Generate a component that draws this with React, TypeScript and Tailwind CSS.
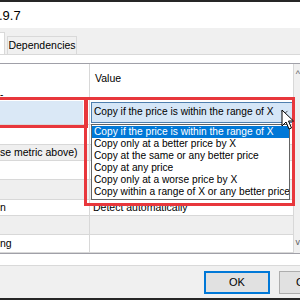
import { ChevronDown } from "lucide-react";

const options = [
  "Copy if the price is within the range of X",
  "Copy only at a better price by X",
  "Copy at the same or any better price",
  "Copy at any price",
  "Copy only at a worse price by X",
  "Copy within a range of X or any better price",
];

type Row = { left: string; right: string; gray?: boolean; h: string };

const rows: Row[] = [
  { left: "", right: "", h: "h-[20px]" },
  { left: "se metric above)", right: "", gray: true, h: "h-[16px]" },
  { left: "", right: "", h: "h-[19px]" },
  { left: "", right: "", gray: true, h: "h-[20px]" },
  { left: "n", right: "Detect automatically", h: "h-[16px]" },
  { left: "", right: "", gray: true, h: "h-[19px]" },
  { left: "ng", right: "", h: "h-[18px]" },
];

function Cursor() {
  return (
    <svg className="absolute left-[281px] top-[109px]" width="14" height="22" viewBox="0 0 14 22">
      <path d="M1 1 L1 17 L5 13 L8 20 L10.5 19 L7.5 12 L12.5 12 Z" fill="white" stroke="black" strokeWidth="1" strokeLinejoin="round" />
    </svg>
  );
}

export default function App() {
  return (
    <div className="relative w-[300px] h-[300px] overflow-hidden bg-[#f0f0f0] text-[10.5px] text-black font-['Liberation_Sans',Arial,sans-serif] leading-none">
      {/* window frame top */}
      <div className="h-[2px] bg-[#262626]" />
      <div className="h-[26px] bg-white flex items-center">
        <span className="text-[13px] -ml-[1px]">.9.7</span>
      </div>

      {/* tabs */}
      <div className="h-[26px] flex items-end">
        <div className="w-[5px] h-[22px] bg-white border-r border-t border-[#d9d9d9]" />
        <div className="ml-[2px] w-[70px] h-[18px] border border-b-0 border-[#d9d9d9] bg-[#f0f0f0] flex items-center justify-center">
          Dependencies
        </div>
      </div>

      {/* tab page */}
      <div className="bg-white border-t border-[#d9d9d9] pt-[8px] h-[211px]">
        <div className="border-t border-b border-[#a0a0a8] flex">
          <div className="flex-1">
            {/* header */}
            <div className="h-[36px] flex">
              <div className="w-[90px] border-r border-[#d8d8d8] relative">
                <span className="absolute left-0 top-[26px] text-[10px]">-</span>
              </div>
              <div className="flex-1 pl-[5px] pt-[9px]">Value</div>
            </div>
            {/* highlighted row */}
            <div className="h-[25px] flex border-b border-[#d8d8d8]">
              <div className="w-[90px] border-r border-[#d8d8d8] pt-[1px] pr-[6px]">
                <div className="h-[23px] bg-[#dae8f6]" />
              </div>
              <div className="flex-1 pl-[1px] pt-[2px]">
                <div className="h-[21px] bg-[#d5e6f7] border border-[#4f7fae] flex items-center pl-[2px] relative whitespace-nowrap overflow-hidden text-[10.2px]">
                  Copy if the price is within the range of X
                  <ChevronDown className="absolute right-[2px] top-[4px]" size={11} strokeWidth={1.5} />
                </div>
              </div>
            </div>
            {rows.map((r, i) => (
              <div key={i} className={`${r.h} flex border-b border-[#d8d8d8] ${r.gray ? "bg-[#efefef]" : "bg-white"}`}>
                <div className="w-[90px] border-r border-[#d8d8d8] flex items-center overflow-hidden whitespace-nowrap">
                  {r.left}
                </div>
                <div className="flex-1 pl-[3px] flex items-center whitespace-nowrap">{r.right}</div>
              </div>
            ))}
          </div>
          {/* scrollbar */}
          <div className="w-[7px] border-l border-[#d8d8d8] bg-[#f0f0f0] flex flex-col justify-between items-end text-[9px] text-[#606060] py-[6px]">
            <span>^</span>
            <span>v</span>
          </div>
        </div>
      </div>

      {/* buttons */}
      <div className="h-[33px] flex items-center gap-[9px] pl-[204px] border-t border-[#d9d9d9] whitespace-nowrap">
        <button className="shrink-0 w-[66px] h-[23px] bg-[#e1e1e1] border-2 border-[#0078d7] text-[11px]">OK</button>
        <button className="shrink-0 w-[66px] h-[23px] bg-[#e1e1e1] border border-[#adadad] text-[11px] text-left pl-[16px]">Cancel</button>
      </div>
      <div className="h-[2px] bg-[#262626]" />

      {/* dropdown list */}
      <div className="absolute left-[91px] top-[124px] w-[199px] h-[76px] bg-white border border-[#646464] pt-[1px] overflow-hidden text-[10.2px]">
        {options.map((o, i) => (
          <div key={o} className={`h-[12px] pl-[2px] flex items-center whitespace-nowrap ${i === 0 ? "bg-[#0078d7] text-white" : ""}`}>
            {o}
          </div>
        ))}
      </div>

      {/* annotation boxes */}
      <div className="absolute -left-[3px] top-[97px] w-[91px] h-[31px] border-[3px] border-[#e8373c]" />
      <div className="absolute left-[84px] top-[97px] w-[211px] h-[109px] border-[3px] border-[#e8373c]" />

      <Cursor />
    </div>
  );
}
